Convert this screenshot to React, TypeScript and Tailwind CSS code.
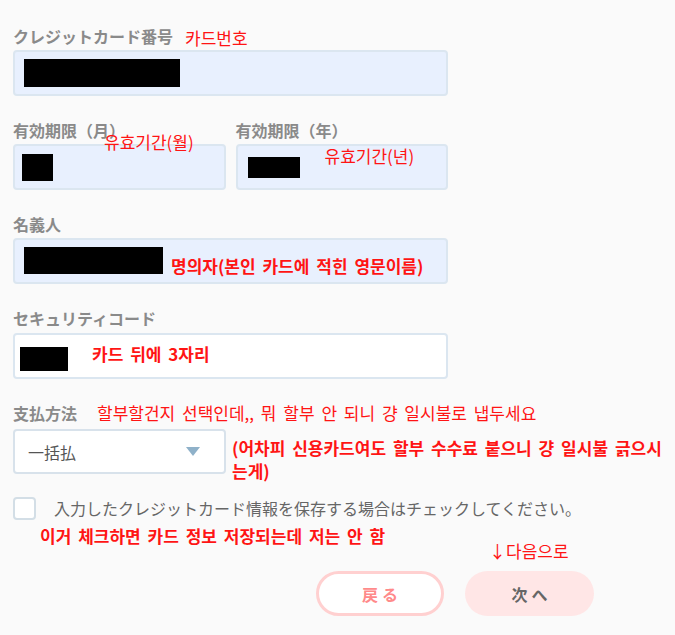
import React from "react";

const JP = "font-['Noto_Sans_CJK_JP','Noto_Sans_CJK_KR',sans-serif]";
const KR = "font-['Noto_Sans_CJK_KR','Noto_Sans_CJK_JP',sans-serif] text-[17px] [word-spacing:3px]";
const RED = "text-[#ff1414]";

function Label({ children, extra }: { children: React.ReactNode; extra?: React.ReactNode }) {
  return (
    <div className="flex h-6 items-center">
      <span className={`${JP} text-[16px] font-bold leading-6 text-[#8a8a8a]`}>{children}</span>
      {extra}
    </div>
  );
}

export default function App() {
  return (
    <div className="min-h-[635px] w-[675px] bg-[#fafafa] pt-6">
      <div className="flex flex-col gap-[22px] pl-[13px]">
        {/* Card number */}
        <div className="w-[435px]">
          <Label
            extra={<span className={`${KR} ml-3 mt-[3px] leading-6 ${RED}`}>카드번호</span>}
          >
            クレジットカード番号
          </Label>
          <div className="mt-[2px] flex h-[46px] items-center rounded-[4px] border-2 border-[#dbe6f0] bg-[#e8f0fe] pl-[9px]">
            <div className="h-[28px] w-[156px] bg-black" />
          </div>
        </div>

        {/* Expiry */}
        <div className="grid w-[435px] grid-cols-2 gap-[10px]">
          <div className="relative">
            <Label>有効期限（月）</Label>
            <div className="mt-[2px] flex h-[46px] items-center rounded-[4px] border-2 border-[#dbe6f0] bg-[#e8f0fe] pl-[7px]">
              <div className="h-[27px] w-[31px] bg-black" />
            </div>
            <span className={`${KR} absolute left-[91px] top-[12px] leading-6 ${RED}`}>
              유효기간(월)
            </span>
          </div>
          <div className="relative">
            <Label>有効期限（年）</Label>
            <div className="mt-[2px] flex h-[46px] items-center rounded-[4px] border-2 border-[#dbe6f0] bg-[#e8f0fe] pl-[10px]">
              <div className="h-[21px] w-[52px] bg-black" />
            </div>
            <span className={`${KR} absolute left-[89px] top-[26px] leading-6 ${RED}`}>
              유효기간(년)
            </span>
          </div>
        </div>

        {/* Name */}
        <div className="w-[435px]">
          <Label>名義人</Label>
          <div className="mt-[2px] flex h-[46px] items-center rounded-[4px] border-2 border-[#dbe6f0] bg-[#e8f0fe] pl-[9px]">
            <div className="mt-[-2px] h-[27px] w-[139px] bg-black" />
            <span className={`${KR} ml-2 mt-[10px] whitespace-nowrap font-bold leading-6 ${RED}`}>
              명의자(본인 카드에 적힌 영문이름)
            </span>
          </div>
        </div>

        {/* Security code */}
        <div className="w-[435px]">
          <Label>セキュリティコード</Label>
          <div className="mt-[3px] flex h-[46px] items-center rounded-[4px] border-2 border-[#dbe6f0] bg-white pl-[5px]">
            <div className="mt-[6px] h-[24px] w-[48px] bg-black" />
            <span className={`${KR} ml-6 mt-[-4px] font-bold leading-6 ${RED}`}>
              카드 뒤에 3자리
            </span>
          </div>
        </div>

        {/* Payment method */}
        <div>
          <Label
            extra={
              <span className={`${KR} ml-5 whitespace-nowrap leading-6 ${RED}`}>
                할부할건지 선택인데,, 뭐 할부 안 되니 걍 일시불로 냅두세요
              </span>
            }
          >
            支払方法
          </Label>
          <div className="mt-1 flex items-start">
            <div className="flex h-[45px] w-[213px] shrink-0 items-center justify-between rounded-[4px] border-2 border-[#d8e2eb] bg-white pl-[13px] pr-[24px]">
              <span className={`${JP} text-[16px] text-[#555]`}>一括払</span>
              <svg width="14" height="10" viewBox="0 0 14 10">
                <polygon points="0,0 14,0 7,9" fill="#8fb1c9" />
              </svg>
            </div>
            <div className={`${KR} ml-[6px] mt-[7px] whitespace-nowrap font-bold leading-[23px] ${RED}`}>
              (어차피 신용카드여도 할부 수수료 붙으니 걍 일시불 긁으시
              <br />
              는게)
            </div>
          </div>
        </div>
      </div>

      {/* Checkbox */}
      <div className="mt-[14px] flex items-center pl-[13px]">
        <div className="h-[23px] w-[23px] rounded-[4px] border-2 border-[#d3dee6] bg-white" />
        <span className={`${JP} ml-[18px] text-[16px] leading-6 text-[#666]`}>
          入力したクレジットカード情報を保存する場合はチェックしてください。
        </span>
      </div>
      <div className={`${KR} mt-[4px] pl-[40px] font-bold leading-6 ${RED}`}>
        이거 체크하면 카드 정보 저장되는데 저는 안 함
      </div>
      <div className={`${KR} mt-[-9px] pl-[489px] leading-6 ${RED}`}>↓다음으로</div>

      {/* Buttons */}
      <div className="mt-[8px] flex gap-[21px] pl-[316px]">
        <button
          className={`${JP} flex h-[45px] w-[128px] items-center justify-center rounded-full border-[3px] border-[#ffd0d0] bg-white pl-[4px] text-[16px] font-bold tracking-[0.25em] text-[#ff8a8a]`}
        >
          戻る
        </button>
        <button
          className={`${JP} flex h-[45px] w-[129px] items-center justify-center rounded-full bg-[#ffe6e6] pl-[4px] text-[16px] font-bold tracking-[0.25em] text-[#666]`}
        >
          次へ
        </button>
      </div>
    </div>
  );
}
